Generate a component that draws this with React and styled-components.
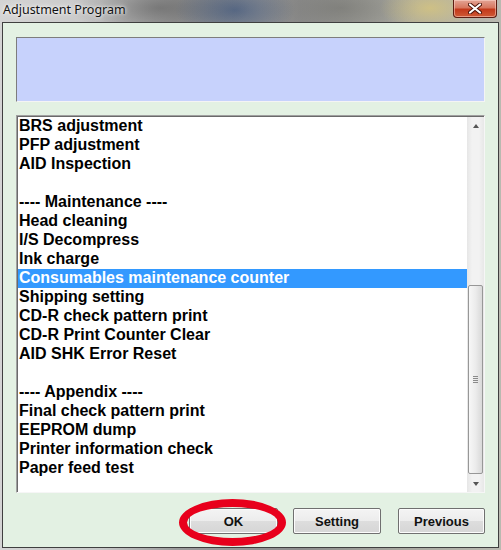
import React from 'react';
import styled, {createGlobalStyle} from 'styled-components';

const Global = createGlobalStyle`
  html, body {
    margin: 0;
    padding: 0;
    background: #9a9a9a;
  }
`

const Window = styled.div`
  width: 501px;
  height: 550px;
  display: flex;
  flex-direction: column;
  overflow: hidden;
  background:
    radial-gradient(ellipse 60px 30px at 235px 10px, rgba(40, 70, 120, 0.55), transparent),
    radial-gradient(ellipse 50px 24px at 430px 8px, rgba(220, 200, 120, 0.7), transparent),
    radial-gradient(ellipse 90px 30px at 160px 8px, rgba(90, 90, 90, 0.6), transparent),
    radial-gradient(ellipse 80px 30px at 340px 8px, rgba(110, 110, 105, 0.55), transparent),
    linear-gradient(90deg, #d4d4d4 0%, #c8c8c8 20%, #9c9c9c 35%, #8e8e8e 60%, #a8a8a0 80%, #b9b9b0 100%);
`

const TitleBar = styled.div`
  height: 22px;
  display: flex;
  justify-content: space-between;
  align-items: flex-start;
  padding-left: 3px;
`

const Title = styled.span`
  font-family: "Noto Sans", "DejaVu Sans", sans-serif;
  font-size: 12.5px;
  line-height: 19px;
  color: #111;
  text-shadow: 0 0 6px rgba(255, 255, 255, 0.9), 0 0 3px rgba(255, 255, 255, 0.9);
`

const CloseButton = styled.div`
  width: 42px;
  height: 17px;
  margin-right: 4px;
  border: 1px solid #5c1d12;
  border-top: none;
  border-radius: 0 0 4px 4px;
  background: linear-gradient(#e3a596 0%, #d7775f 45%, #c3391b 55%, #cf5a35 100%);
  display: flex;
  align-items: center;
  justify-content: center;
  box-shadow: inset 0 0 0 1px rgba(255, 220, 210, 0.5);
`

const Client = styled.div`
  flex: 1;
  margin: 0 2px 2px 2px;
  border: 1px solid #3f3f3f;
  background: #e3f1e3;
  padding: 14px 13px 12px 13px;
  display: flex;
  flex-direction: column;
`

const MessageBox = styled.div`
  height: 63px;
  background: #c7d2fc;
  border-top: 1px solid #7d7d7d;
  border-left: 1px solid #7d7d7d;
  border-right: 1px solid #f4f4f4;
  border-bottom: 1px solid #f4f4f4;
`

const ListBox = styled.div`
  margin-top: 13px;
  height: 376px;
  display: flex;
  background: #fff;
  border-style: solid;
  border-width: 1px;
  border-color: #a0a0a0 #f6f6f6 #f6f6f6 #a0a0a0;
  box-shadow: inset 1px 1px 0 #6a6a6a;
  padding: 0 0 0 1px;
`

const Items = styled.div`
  flex: 1;
  display: flex;
  flex-direction: column;
  padding-top: 1px;
`

const Row = styled.div`
  height: 19px;
  padding-left: 1px;
  font-family: "Liberation Sans", Arial, sans-serif;
  font-weight: bold;
  font-size: 16px;
  line-height: 18px;
  white-space: pre;
  color: ${p => p.$selected ? '#fff' : '#000'};
  background: ${p => p.$selected ? '#3399ff' : 'transparent'};
`

const ScrollBar = styled.div`
  width: 17px;
  display: flex;
  flex-direction: column;
  margin-top: 1px;
  background: linear-gradient(90deg, #e6e6e6, #f2f2f2 30%, #f2f2f2 70%, #e8e8e8);
`

const ArrowBox = styled.div`
  height: 17px;
  display: flex;
  align-items: center;
  justify-content: center;
`

const Arrow = styled.div`
  width: 0;
  height: 0;
  border-left: 3px solid transparent;
  border-right: 3px solid transparent;
  ${p => p.$up
    ? 'border-bottom: 4px solid #555;'
    : 'border-top: 4px solid #555;'}
`

const Track = styled.div`
  flex: 1;
  display: flex;
  flex-direction: column;
  padding: 0 1px;
`

const Thumb = styled.div`
  height: 187px;
  border: 1px solid #979797;
  border-radius: 2px;
  background: linear-gradient(90deg, #f7f7f7, #ececec 50%, #d9d9d9);
  display: flex;
  align-items: center;
  justify-content: center;
`

const Grip = styled.div`
  width: 5px;
  height: 7px;
  background: repeating-linear-gradient(#8a8a8a 0, #8a8a8a 1px, transparent 1px, transparent 2px);
`

const ButtonBar = styled.div`
  margin-top: 15px;
  display: flex;
  justify-content: flex-end;
`

const ButtonSlot = styled.div`
  position: relative;
  margin-right: ${p => p.$gap || 0}px;
`

const Button = styled.div`
  box-sizing: border-box;
  width: ${p => p.$w}px;
  height: 26px;
  border: 1px solid #707070;
  border-radius: 2px;
  background: linear-gradient(#f4f4f4 0%, #ececec 50%, #dddddd 51%, #d6d6d6 100%);
  box-shadow: inset 0 0 0 1px #fcfcfc;
  display: flex;
  align-items: center;
  justify-content: center;
  font-family: "Liberation Sans", Arial, sans-serif;
  font-weight: bold;
  font-size: 13px;
  color: #111;
`

const Ring = styled.div`
  position: absolute;
  left: -10px;
  top: -9px;
  width: 91px;
  height: 31px;
  border: 8px solid #e8001c;
  border-radius: 50%;
  pointer-events: none;
`

const items = [
    'BRS adjustment',
    'PFP adjustment',
    'AID Inspection',
    '',
    '---- Maintenance ----',
    'Head cleaning',
    'I/S Decompress',
    'Ink charge',
    'Consumables maintenance counter',
    'Shipping setting',
    'CD-R check pattern print',
    'CD-R Print Counter Clear',
    'AID SHK Error Reset',
    '',
    '---- Appendix ----',
    'Final check pattern print',
    'EEPROM dump',
    'Printer information check',
    'Paper feed test',
]

const App = () => {
    const selected = 8;
    return (
        <Window>
            <Global/>
            <TitleBar>
                <Title>Adjustment Program</Title>
                <CloseButton>
                    <svg width="14" height="11" viewBox="0 0 14 11">
                        <path d="M2 1.5 L12 9.5 M12 1.5 L2 9.5" stroke="#4a1208" strokeWidth="4" strokeLinecap="round"/>
                        <path d="M2 1.5 L12 9.5 M12 1.5 L2 9.5" stroke="#fff" strokeWidth="2.2" strokeLinecap="round"/>
                    </svg>
                </CloseButton>
            </TitleBar>
            <Client>
                <MessageBox/>
                <ListBox>
                    <Items>
                        {items.map((text, i) => (
                            <Row key={i} $selected={i === selected}>{text}</Row>
                        ))}
                    </Items>
                    <ScrollBar>
                        <ArrowBox><Arrow $up/></ArrowBox>
                        <Track>
                            <div style={{height: 151}}/>
                            <Thumb><Grip/></Thumb>
                        </Track>
                        <ArrowBox><Arrow/></ArrowBox>
                    </ScrollBar>
                </ListBox>
                <ButtonBar>
                    <ButtonSlot $gap={15}>
                        <Button $w={89}>OK</Button>
                        <Ring/>
                    </ButtonSlot>
                    <ButtonSlot $gap={17}>
                        <Button $w={88}>Setting</Button>
                    </ButtonSlot>
                    <ButtonSlot>
                        <Button $w={87}>Previous</Button>
                    </ButtonSlot>
                </ButtonBar>
            </Client>
        </Window>
    );
};

export default App;
